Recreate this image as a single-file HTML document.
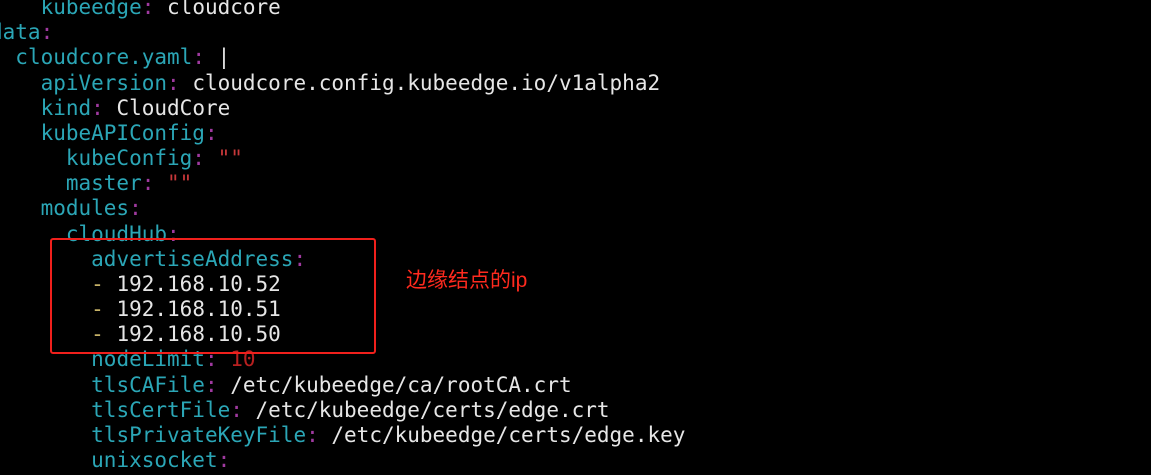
<!DOCTYPE html>
<html><head><meta charset="utf-8"><style>
html,body{margin:0;padding:0;background:#000;width:1151px;height:475px;overflow:hidden;position:relative}
pre{position:absolute;left:-10px;top:-5px;margin:0;font-family:"DejaVu Sans Mono","Liberation Mono",monospace;font-size:21px;line-height:25.17px;color:#e6e6e6}
.k{color:#2ba6b6}.c{color:#a03aa0}.s{color:#c8383a}.d{color:#c8b468}.n{color:#b82020}
.box{position:absolute;left:50px;top:238px;width:322px;height:112px;border:2px solid #f0201c;border-radius:3px}
.note{position:absolute;left:406px;top:264px;font-family:"Liberation Sans","Noto Sans CJK SC",sans-serif;font-size:21px;color:#ff2a1e}
</style></head><body>
<pre>    <span class="k">kubeedge</span><span class="c">:</span> cloudcore
<span class="k">data</span><span class="c">:</span>
  <span class="k">cloudcore.yaml</span><span class="c">:</span> |
    <span class="k">apiVersion</span><span class="c">:</span> cloudcore.config.kubeedge.io/v1alpha2
    <span class="k">kind</span><span class="c">:</span> CloudCore
    <span class="k">kubeAPIConfig</span><span class="c">:</span>
      <span class="k">kubeConfig</span><span class="c">:</span> <span class="s">""</span>
      <span class="k">master</span><span class="c">:</span> <span class="s">""</span>
    <span class="k">modules</span><span class="c">:</span>
      <span class="k">cloudHub</span><span class="c">:</span>
        <span class="k">advertiseAddress</span><span class="c">:</span>
        <span class="d">-</span> 192.168.10.52
        <span class="d">-</span> 192.168.10.51
        <span class="d">-</span> 192.168.10.50
        <span class="k">nodeLimit</span><span class="c">:</span> <span class="n">10</span>
        <span class="k">tlsCAFile</span><span class="c">:</span> /etc/kubeedge/ca/rootCA.crt
        <span class="k">tlsCertFile</span><span class="c">:</span> /etc/kubeedge/certs/edge.crt
        <span class="k">tlsPrivateKeyFile</span><span class="c">:</span> /etc/kubeedge/certs/edge.key
        <span class="k">unixsocket</span><span class="c">:</span></pre>
<div class="box"></div>
<div class="note">边缘结点的ip</div>
</body></html>
